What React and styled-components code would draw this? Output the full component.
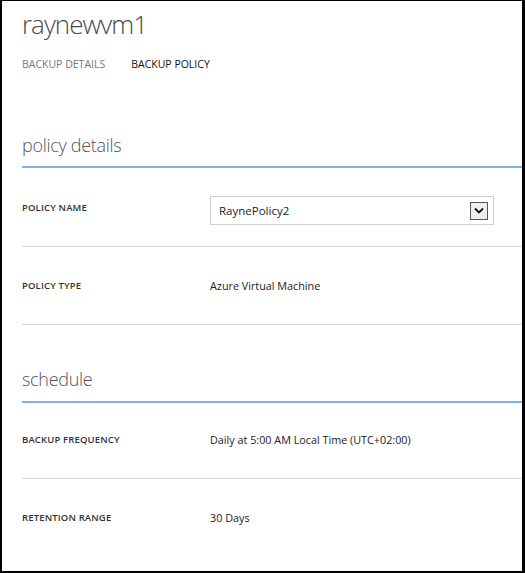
import React from "react";
import styled, { createGlobalStyle } from "styled-components";

const GlobalStyle = createGlobalStyle`
  html, body {
    margin: 0;
    padding: 0;
    background: #000;
  }
  body {
    font-family: "Open Sans", "Noto Sans", sans-serif;
  }
`;

const Frame = styled.div`
  width: 525px;
  height: 573px;
  box-sizing: border-box;
  border-style: solid;
  border-color: #000;
  border-width: 1px 3px 2px 2px;
  background: #fff;
  overflow: hidden;
`;

const Title = styled.h1`
  margin: 0;
  padding: 6px 0 0 20px;
  height: 51px;
  box-sizing: border-box;
  font-size: 26px;
  line-height: 34px;
  font-weight: 300;
  color: #4a4a4a;
  letter-spacing: -1px;
`;

const Tabs = styled.nav`
  display: flex;
  gap: 26px;
  padding-left: 20px;
  height: 24px;
  align-items: center;
`;

const Tab = styled.span`
  font-size: 10.5px;
  text-transform: uppercase;
  color: ${(p) => (p.active ? "#111" : "#777")};
`;

const SectionHead = styled.h2`
  margin: 0 0 0 20px;
  height: ${(p) => p.height}px;
  display: flex;
  align-items: flex-end;
  padding-bottom: ${(p) => p.gap || 8}px;
  box-sizing: border-box;
  font-size: 18px;
  font-weight: 300;
  letter-spacing: -0.3px;
  color: #555;
  border-bottom: 2px solid #7fb2de;
`;

const Row = styled.div`
  display: grid;
  grid-template-columns: 188px 1fr;
  align-items: center;
  margin-left: 20px;
  height: ${(p) => p.height || 77}px;
  box-sizing: border-box;
  padding-bottom: ${(p) => p.lift || 0}px;
  border-bottom: ${(p) => (p.last ? "none" : "1px solid #d9d9d9")};
`;

const Label = styled.div`
  font-size: 9.5px;
  font-weight: 600;
  text-transform: uppercase;
  color: #333;
  letter-spacing: 0.15px;
`;

const Value = styled.div`
  font-size: 10.8px;
  color: #222;
`;

const Select = styled.div`
  width: 284px;
  height: 29px;
  margin-top: 7px;
  box-sizing: border-box;
  border: 1px solid #cfcfcf;
  display: flex;
  align-items: center;
  justify-content: space-between;
  padding: 0 5px 0 8px;
  font-size: 11.5px;
  color: #222;
`;

const Caret = styled.span`
  width: 18px;
  height: 18px;
  box-sizing: border-box;
  border: 1px solid #555;
  background: #eee;
  display: flex;
  align-items: center;
  justify-content: center;
`;

export default function App() {
  return (
    <>
      <GlobalStyle />
      <Frame>
        <Title>raynewvm1</Title>
        <Tabs>
          <Tab>Backup Details</Tab>
          <Tab active>Backup Policy</Tab>
        </Tabs>
        <SectionHead height={92} gap={9}>policy details</SectionHead>
        <Row height={79}>
          <Label>Policy Name</Label>
          <Select>
            RaynePolicy2
            <Caret>
              <svg width="10" height="7" viewBox="0 0 10 7">
                <path d="M1 1.5 L5 5.5 L9 1.5" fill="none" stroke="#111" strokeWidth="1.8" />
              </svg>
            </Caret>
          </Select>
        </Row>
        <Row height={78}>
          <Label>Policy Type</Label>
          <Value>Azure Virtual Machine</Value>
        </Row>
        <SectionHead height={78} gap={10}>schedule</SectionHead>
        <Row height={76} lift={3}>
          <Label>Backup Frequency</Label>
          <Value>Daily at 5:00 AM Local Time (UTC+02:00)</Value>
        </Row>
        <Row height={80} lift={3} last>
          <Label>Retention Range</Label>
          <Value>30 Days</Value>
        </Row>
      </Frame>
    </>
  );
}
